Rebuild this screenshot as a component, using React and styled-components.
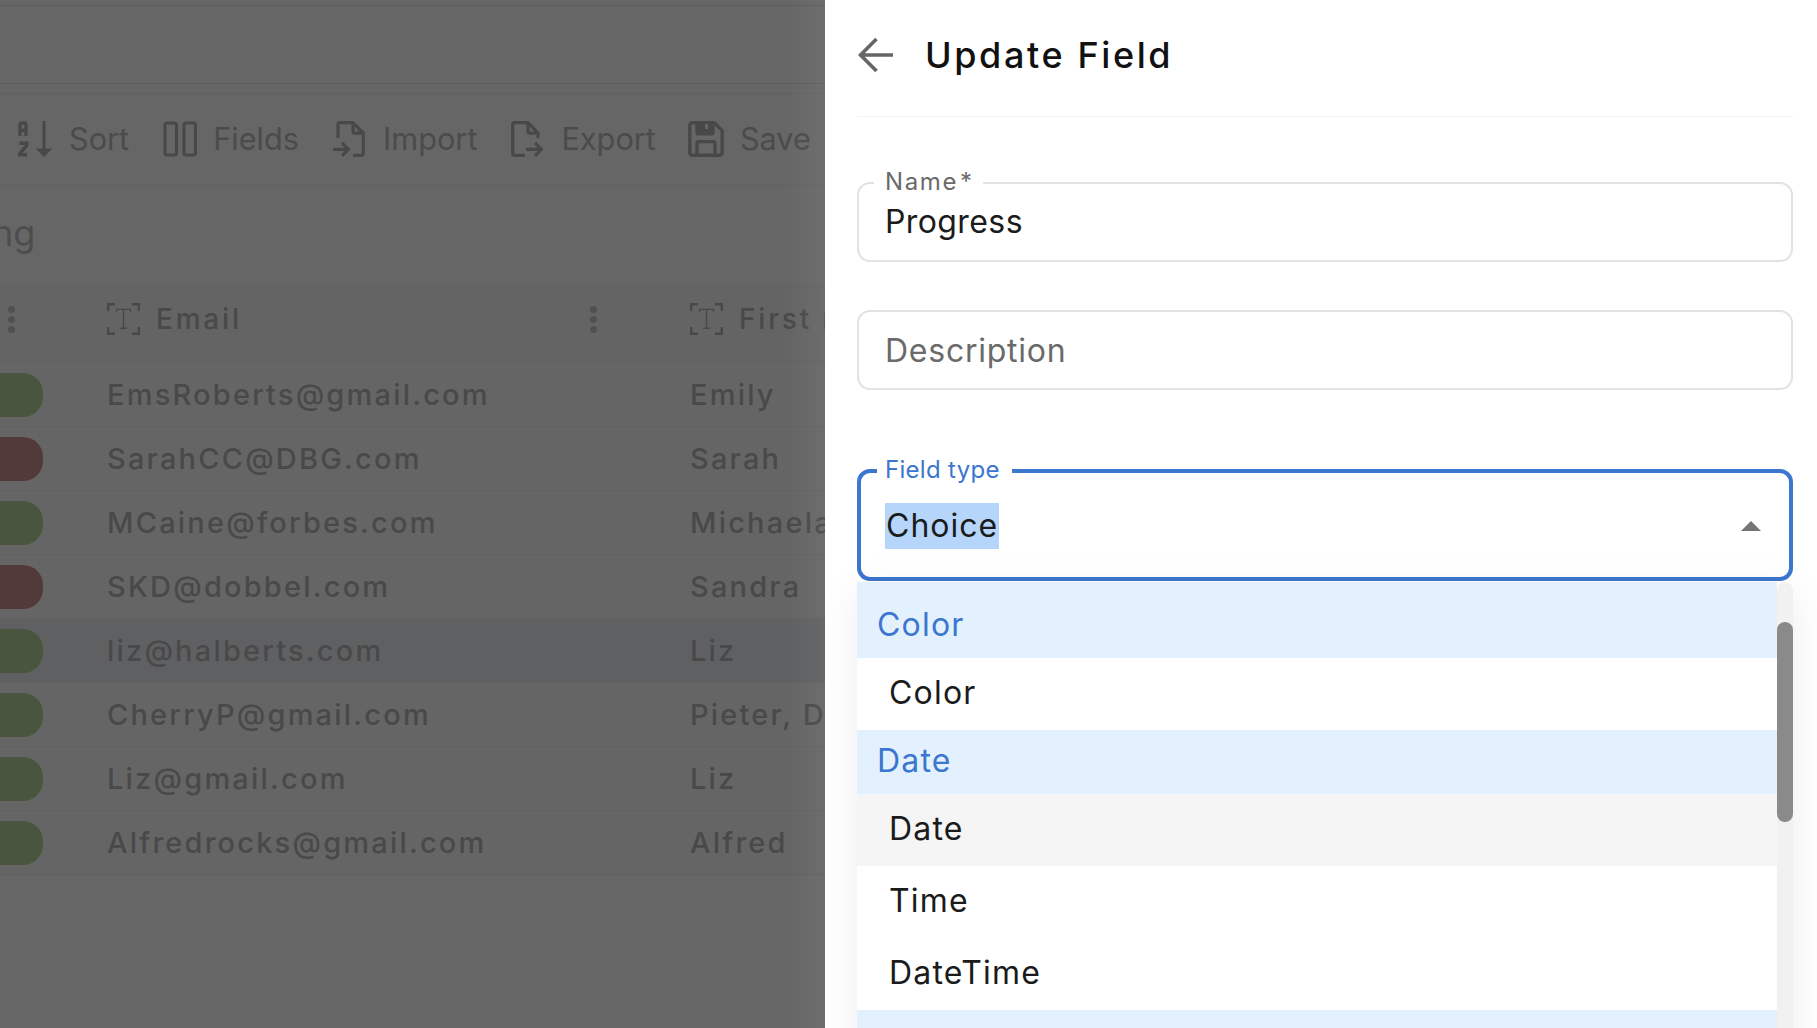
import React from "react";
import styled, { createGlobalStyle } from "styled-components";

const Global = createGlobalStyle`
  html, body { margin: 0; padding: 0; height: 100%; overflow: hidden; background: #fff; }
  #root { height: 100%; }
  * { box-sizing: border-box; }
`;

const Page = styled.div`
  position: relative;
  width: 100%;
  height: 100vh;
  overflow: hidden;
  background: #fff;
  font-family: Inter, "Liberation Sans", sans-serif;
`;
const TopStrip = styled.div`
  height: 79px;
  margin-top: 5px;
  border-top: 1px solid #e6e6e6;
  border-bottom: 1px solid #ececec;
`;
const SubStrip = styled.div`
  height: 10px;
  border-bottom: 1px solid #f0f0f0;
`;
const Toolbar = styled.div`
  display: flex;
  align-items: center;
  gap: 34px;
  height: 92px;
  padding-left: 17px;
  border-bottom: 1px solid #f4f4f4;
  color: #bcbcbc;
`;
const ToolItem = styled.div`
  display: flex;
  align-items: center;
  gap: ${p => p.$gap || 16}px;
  font-size: 30.7px;
  line-height: 36px;
  margin-top: -2px;
  margin-left: ${p => p.$pull || 0}px;
  white-space: nowrap;
  svg { display: block; flex: none; color: #b4b4b4; }
`;
const SectionTitle = styled.div`
  height: 97px;
  padding-top: 25px;
  margin-left: -8px;
  font-size: 36px;
  line-height: 44px;
  color: #c0c0c0;
`;
const Table = styled.div`
  width: 825px;
  overflow: hidden;
`;
const HeadRow = styled.div`
  display: grid;
  grid-template-columns: 107px 583px 1fr;
  align-items: center;
  height: 80px;
  padding-bottom: 7px;
  background: #f9fbfd;
  border-bottom: 1px solid #f1f3f5;
`;
const HeadFirst = styled.div`
  display: flex;
  padding-left: 8px;
`;
const HeadCell = styled.div`
  position: relative;
  display: flex;
  align-items: center;
  gap: 16px;
  font-size: 28px;
  font-weight: 500;
  letter-spacing: 2.8px;
  color: #b7b7b7;
  white-space: nowrap;
  svg { flex: none; }
`;
const Dots = styled.div`
  display: flex;
  flex-direction: column;
  gap: 3px;
  i { display: block; width: 7px; height: 7px; border-radius: 50%; background: #c6c8ca; }
`;
const HeadEnd = styled.div`
  position: absolute;
  right: 52px;
  top: 50%;
  transform: translateY(-50%);
  display: flex;
  align-items: center;
  gap: 40px;
`;
const Rule = styled.div`
  width: 1px;
  height: 44px;
  background: #f0f2f4;
`;
const Row = styled.div`
  display: grid;
  grid-template-columns: 107px 583px 1fr;
  align-items: center;
  height: 64px;
  background: ${p => (p.$hover ? "#eef1f5" : "#fcfdfe")};
  border-bottom: 1px solid #f0f1f2;
  font-size: 29px;
  font-weight: 500;
  letter-spacing: 2.2px;
  color: #b6b6b8;
  white-space: nowrap;
`;
const Pill = styled.div`
  width: 63px;
  height: 44px;
  margin-left: -20px;
  border-radius: 20px;
  background: ${p => (p.$bad ? "#cb9189" : "#b6d59c")};
`;
const Scrim = styled.div`
  position: absolute;
  inset: 0;
  background: rgba(0, 0, 0, 0.6);
`;
const Glow = styled.div`
  position: absolute;
  top: 0;
  bottom: 0;
  left: 785px;
  width: 40px;
  background: linear-gradient(to right, rgba(255, 255, 255, 0), rgba(255, 255, 255, 0.05));
`;
const Drawer = styled.aside`
  position: absolute;
  top: 0;
  bottom: 0;
  left: 825px;
  right: 0;
  padding: 0 24px 0 32px;
  background: #fff;
  overflow: hidden;
`;
const DrawerHeader = styled.header`
  display: flex;
  align-items: center;
  gap: 31px;
  height: 117px;
  padding: 0 0 7px 1px;
  border-bottom: 1px solid #f2f2f2;
  svg { display: block; flex: none; }
`;
const Title = styled.h1`
  margin: 0;
  font-size: 36px;
  font-weight: 500;
  letter-spacing: 2.6px;
  line-height: 44px;
  color: #111;
`;
const Outline = styled.div`
  position: relative;
  display: flex;
  align-items: center;
  justify-content: space-between;
  height: ${p => p.$h}px;
  margin-top: ${p => p.$top}px;
  padding: ${p => (p.$focus ? "2px 26px 0 25px" : p.$muted ? "2px 26px 0 26px" : "0 26px 0 26px")};
  border: ${p => (p.$focus ? "4px solid #3b76cf" : "2px solid #e2e2e2")};
  border-radius: 13px;
  font-size: 32px;
  line-height: 46px;
  letter-spacing: ${p => (p.$focus ? "1px" : p.$muted ? "0.75px" : "0.4px")};
  color: ${p => (p.$muted ? "#6a6a6a" : "#1b1b1b")};
`;
const Legend = styled.label`
  position: absolute;
  top: ${p => (p.$focus ? "-3px" : "-2px")};
  left: ${p => (p.$focus ? "16px" : "15px")};
  transform: translateY(-50%);
  padding: ${p => (p.$focus ? "0 12px 0 8px" : "0 11px")};
  background: #fff;
  font-size: 24px;
  line-height: 28px;
  letter-spacing: 0.3px;
  white-space: nowrap;
  color: ${p => (p.$focus ? "#3b76cf" : "#6a6a6a")};
`;
const LegendWord = styled.span`
  letter-spacing: 1.6px;
  margin-right: 2px;
`;
const Selected = styled.span`
  display: inline-block;
  background: #b6d5fb;
  margin-left: -1px;
  padding: 0 1px;
`;
const Caret = styled.span`
  width: 0;
  height: 0;
  margin-right: 2px;
  border-left: 10px solid transparent;
  border-right: 10px solid transparent;
  border-bottom: 10px solid #757575;
`;
const Menu = styled.div`
  position: relative;
  margin-top: 1px;
  background: #fff;
  box-shadow: 0 8px 40px rgba(0, 0, 0, 0.07);
`;
const MenuList = styled.div`
  margin-right: 16px;
  font-size: 32px;
  letter-spacing: 1.2px;
`;
const Group = styled.div`
  display: flex;
  align-items: center;
  height: ${p => p.$h}px;
  padding: ${p => (p.$first ? "9px 0 0 20px" : "0 0 3px 20px")};
  background: #e3f0fd;
  color: #3b76cf;
`;
const Option = styled.div`
  display: flex;
  align-items: center;
  height: 72px;
  padding: 0 0 3px 32px;
  background: ${p => (p.$active ? "#f5f5f5" : "#fff")};
  color: #1b1b1b;
`;
const Track = styled.div`
  position: absolute;
  top: 0;
  right: 0;
  bottom: 0;
  width: 16px;
  border-radius: 8px 8px 0 0;
  background: #f1f1f1;
`;
const Thumb = styled.div`
  margin-top: 40px;
  height: 200px;
  border-radius: 8px;
  background: #8a8a8a;
`;

const Sort = () => (
  <svg width="36" height="36" viewBox="0 0 36 36" fill="none" stroke="currentColor" strokeWidth="3.4">
    <path d="M3 15V4.2C3 2.6 3.8 1.7 6 1.7S9 2.6 9 4.2V15M3 9.2h6" />
    <path d="M2.4 22.3h7.4v2.2L2.6 32.6v1.2h7.6" />
    <path d="M27 0v31" strokeWidth="3" />
    <path d="M18.6 27.6h16.8L27 36z" fill="currentColor" stroke="none" />
  </svg>
);
const Columns = () => (
  <svg width="34" height="36" viewBox="0 0 34 36" fill="none" stroke="currentColor" strokeWidth="3.2">
    <rect x="2" y="2" width="11.5" height="32" rx="2" />
    <rect x="21" y="2" width="11.5" height="32" rx="2" />
  </svg>
);
const FileIn = () => (
  <svg width="32" height="36" viewBox="0 0 32 36" fill="none" stroke="currentColor" strokeWidth="3.2" strokeLinejoin="round">
    <path d="M5 17V3.4C5 2.4 5.6 1.7 6.6 1.7H20L30.3 12V32.6c0 1-.7 1.7-1.7 1.7H20" />
    <path d="M20 1.7V11c0 .8.4 1.2 1.2 1.2h9" />
    <path d="M0 28.3h14M9 21.8l6.4 6.5L9 34.8" strokeLinejoin="miter" />
  </svg>
);
const FileOut = () => (
  <svg width="34" height="36" viewBox="0 0 34 36" fill="none" stroke="currentColor" strokeWidth="3.2" strokeLinejoin="round">
    <path d="M14 34.3H3.4c-1 0-1.7-.7-1.7-1.7V3.4c0-1 .7-1.7 1.7-1.7H17L27 12v5" />
    <path d="M17 1.7V11c0 .8.4 1.2 1.2 1.2H27" />
    <path d="M15 28.3h15M24 21.8l6.4 6.5L24 34.8" strokeLinejoin="miter" />
  </svg>
);
const Floppy = () => (
  <svg width="36" height="36" viewBox="0 0 36 36" fill="none" stroke="currentColor" strokeWidth="3.4" strokeLinejoin="round">
    <path d="M4 1.8h22.4L34.2 9.6V31.6c0 1.5-1.1 2.6-2.6 2.6H4.4c-1.5 0-2.6-1.1-2.6-2.6V4.4C1.8 2.9 2.7 1.8 4 1.8z" />
    <path d="M9 2v9.6c0 .8.5 1.2 1.2 1.2h13.6c.8 0 1.2-.4 1.2-1.2V2" fill="currentColor" />
    <path d="M9 34V22c0-.9.5-1.4 1.4-1.4h15.2c.9 0 1.4.5 1.4 1.4v12" />
    <rect x="17" y="3" width="3" height="5" fill="#fff" stroke="none" />
  </svg>
);
const TextType = () => (
  <svg width="33" height="32" viewBox="0 0 33 32" fill="none" stroke="#b4b4b4" strokeWidth="2.4">
    <path d="M8 1.2H1.2V8M25 1.2h6.8V8M8 30.8H1.2V24M25 30.8h6.8V24" />
    <path d="M9.5 9V6.4h14V9M16.5 6.4V25M13 25.2h7" strokeWidth="1.4" />
  </svg>
);
const Back = () => (
  <svg width="36" height="36" viewBox="0 0 36 36" fill="none" stroke="#666" strokeWidth="3.6">
    <path d="M35 18H3M18.5 2L2.5 18l16 16" />
  </svg>
);

const people = [
  ["EmsRoberts@gmail.com", "Emily"],
  ["SarahCC@DBG.com", "Sarah", true],
  ["MCaine@forbes.com", "Michaela"],
  ["SKD@dobbel.com", "Sandra", true],
  ["liz@halberts.com", "Liz", false, true],
  ["CherryP@gmail.com", "Pieter, Dora"],
  ["Liz@gmail.com", "Liz"],
  ["Alfredrocks@gmail.com", "Alfred"],
];

export default function App() {
  return (
    <Page>
      <Global />
      <TopStrip />
      <SubStrip />
      <Toolbar>
        <ToolItem><Sort />Sort</ToolItem>
        <ToolItem><Columns />Fields</ToolItem>
        <ToolItem $gap={18}><FileIn />Import</ToolItem>
        <ToolItem><FileOut />Export</ToolItem>
        <ToolItem $pull={-2}><Floppy />Save</ToolItem>
      </Toolbar>
      <SectionTitle>ng</SectionTitle>
      <Table>
        <HeadRow>
          <HeadFirst><Dots><i /><i /><i /></Dots></HeadFirst>
          <HeadCell>
            <TextType />Email
            <HeadEnd><Dots><i /><i /><i /></Dots><Rule /></HeadEnd>
          </HeadCell>
          <HeadCell><TextType />First name</HeadCell>
        </HeadRow>
        {people.map(([email, name, bad, hover]) => (
          <Row key={email} $hover={hover}>
            <Pill $bad={bad} />
            <div>{email}</div>
            <div>{name}</div>
          </Row>
        ))}
      </Table>
      <Scrim />
      <Glow />
      <Drawer>
        <DrawerHeader>
          <Back />
          <Title>Update Field</Title>
        </DrawerHeader>
        <Outline $h={80} $top={65}>
          <Legend><LegendWord>Name</LegendWord>*</Legend>
          Progress
        </Outline>
        <Outline $h={80} $top={48} $muted>Description</Outline>
        <Outline $h={112} $top={79} $focus>
          <Legend $focus>Field type</Legend>
          <Selected>Choice</Selected>
          <Caret />
        </Outline>
        <Menu>
          <MenuList>
            <Group $h={76} $first>Color</Group>
            <Option>Color</Option>
            <Group $h={64}>Date</Group>
            <Option $active>Date</Option>
            <Option>Time</Option>
            <Option>DateTime</Option>
            <Group $h={64}>Number</Group>
          </MenuList>
          <Track><Thumb /></Track>
        </Menu>
      </Drawer>
    </Page>
  );
}
